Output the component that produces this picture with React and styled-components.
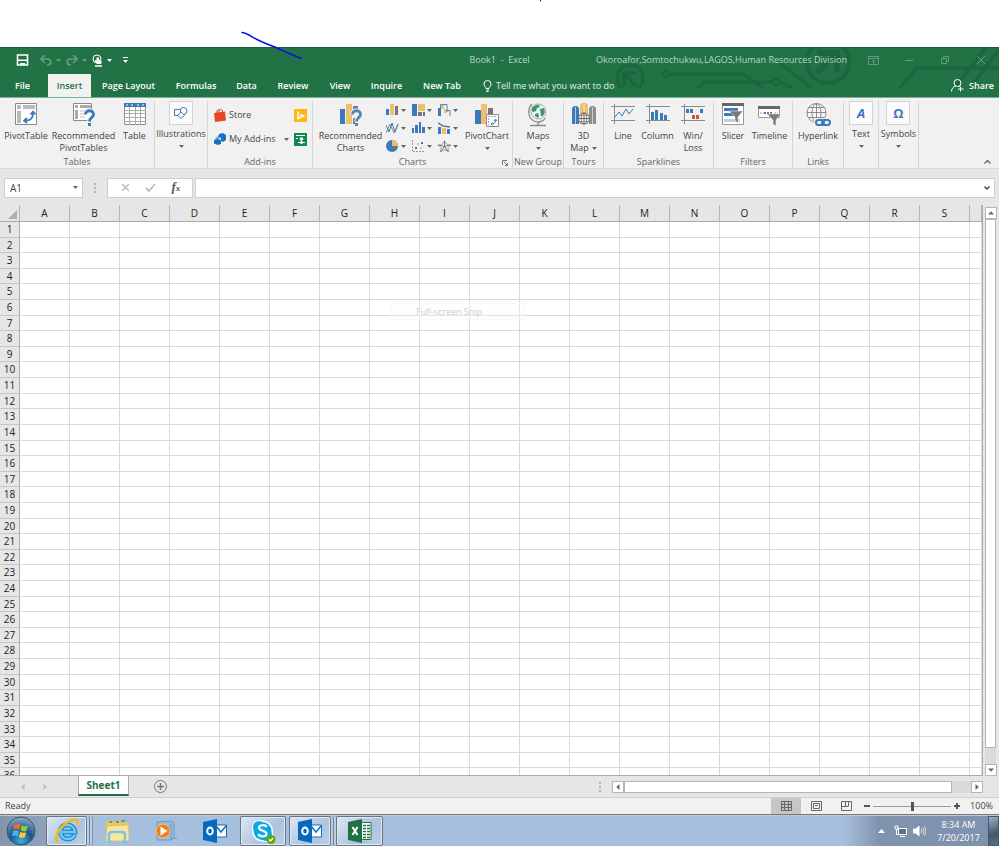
import React from "react";
import styled, { createGlobalStyle } from "styled-components";

const GlobalStyle = createGlobalStyle`
  * { box-sizing: border-box; }
  body {
    margin: 0;
    background: #fff;
    color: #444;
    font-family: "Open Sans", "Noto Sans", sans-serif;
    font-size: 9px;
    line-height: 12px;
  }
  button, input {
    font: inherit;
    color: inherit;
    background: none;
    border: 0;
    padding: 0;
    margin: 0;
    outline: none;
  }
  svg { display: block; flex: none; }
`;

const Page = styled.div`
  position: relative;
  display: flex;
  flex-direction: column;
  height: 100vh;
  padding-top: 47px;
  overflow: hidden;
`;

const Ink = styled.svg`
  position: absolute;
  top: 0;
  left: 240px;
  z-index: 5;
  pointer-events: none;
`;

/* title bar and tabs */

const Header = styled.header`
  position: relative;
  flex: none;
  background: #217346;
  color: #fff;
  border-top: 1px solid #1a6039;
`;

const Circuit = styled.svg`
  position: absolute;
  top: 0;
  right: 0;
`;

const TitleRow = styled.div`
  position: relative;
  display: grid;
  grid-template-columns: 1fr auto 1fr;
  align-items: center;
  height: 24px;
  color: #b9d6c5;
`;

const TitleText = styled.span`
  font-size: 9px;
  white-space: pre;
`;

const QuickAccess = styled.div`
  display: flex;
  align-items: center;
  gap: 5px;
  padding-left: 16px;
`;

const QuickButton = styled.button`
  display: flex;
  align-items: center;
  gap: 4px;
  opacity: ${(p) => (p.$dim ? 0.3 : 1)};

  &:first-child { margin-right: 6px; }
`;

const TitleRight = styled.div`
  display: flex;
  justify-content: flex-end;
  align-items: center;
  white-space: nowrap;
  min-width: 0;
`;

const Account = styled(TitleText)`
  padding-right: 8px;
`;

const WindowButton = styled.button`
  width: 36px;
  height: 22px;
  display: flex;
  align-items: center;
  justify-content: center;
  color: #639b7a;
`;

const TabRow = styled.nav`
  position: relative;
  display: flex;
  height: 25px;
  padding-top: 2px;
  font-weight: 600;
`;

const Tab = styled.button`
  flex: none;
  width: ${(p) => p.$width}px;
  margin-right: ${(p) => (p.$file ? 3 : 0)}px;
  background: ${(p) => (p.$active ? "#f1f1f1" : "none")};
  color: ${(p) => (p.$active ? "#217346" : "#fff")};
  white-space: nowrap;
`;

const TellMe = styled.button`
  display: flex;
  align-items: center;
  gap: 4px;
  margin-left: 11px;
  color: #e2efe7;
  font-weight: 400;
`;

const Share = styled.button`
  display: flex;
  align-items: center;
  gap: 5px;
  margin-left: auto;
  padding-right: 5px;
  color: #fff;
`;

/* ribbon */

const Ribbon = styled.div`
  position: relative;
  display: flex;
  flex: none;
  height: 72px;
  padding-top: 3px;
  background: #f1f1f1;
  border-top: 1px solid #7fb094;
  border-bottom: 1px solid #d9d9d9;
`;

const Group = styled.section`
  display: flex;
  flex-direction: column;
  flex: none;
  width: ${(p) => p.$width}px;
  margin-bottom: ${(p) => p.$bottom || 0}px;
  border-right: 1px solid #d5d5d5;
`;

const GroupBody = styled.div`
  display: flex;
  flex: 1;
  justify-content: center;
`;

const GroupName = styled.div`
  position: relative;
  height: 12px;
  line-height: 12px;
  text-align: center;
  color: #666;
  white-space: nowrap;
`;

const Launcher = styled.button`
  position: absolute;
  right: 4px;
  top: 4px;
`;

const BigButton = styled.button`
  display: flex;
  flex-direction: column;
  align-items: center;
  width: ${(p) => p.$width}px;
  padding-top: 2px;
  white-space: nowrap;
  line-height: 12px;

  .icon { height: 27px; }
  .row { display: flex; align-items: center; gap: 3px; height: 12px; }
`;

const BoxButton = styled.button`
  display: flex;
  flex-direction: column;
  align-items: center;
  white-space: nowrap;

  .box {
    display: flex;
    align-items: center;
    justify-content: center;
    width: 24px;
    height: 24px;
    margin-bottom: 3px;
    background: #fbfbfb;
    border: 1px solid #d2d2d2;
  }
  svg.arrow { margin-top: 5px; }
`;

const Glyph = styled.span`
  color: #3b7ab8;
  font-size: 13px;
  font-weight: 700;
  font-style: ${(p) => (p.$italic ? "italic" : "normal")};
`;

const AddIns = styled.div`
  display: grid;
  grid-template-columns: 1fr auto;
  align-content: start;
  width: 100%;
  padding: 2px 5px 0 6px;
`;

const AddInButton = styled.button`
  display: flex;
  align-items: center;
  gap: 3px;
  height: 24px;
  white-space: nowrap;

  svg.arrow { margin-left: 5px; }
`;

const ChartGrid = styled.div`
  display: grid;
  grid-template-columns: repeat(3, 26px);
  grid-auto-rows: 18px;
  align-content: start;
`;

const ChartButton = styled.button`
  display: flex;
  align-items: center;
  gap: 2px;
`;

const Collapse = styled.button`
  margin: auto 8px 4px auto;
`;

/* formula bar */

const FormulaBar = styled.div`
  display: flex;
  flex: none;
  align-items: center;
  height: 36px;
  padding: 1px 4px 0;
  background: #e6e6e6;
`;

const Field = styled.div`
  display: flex;
  align-items: center;
  height: 20px;
  width: ${(p) => p.$width || "auto"};
  flex: ${(p) => (p.$grow ? 1 : "none")};
  padding: 0 4px 0 5px;
  background: #fff;
  border: 1px solid #cfcfcf;
  font-size: 10px;

  input { flex: 1; min-width: 0; width: 0; }
`;

const FormulaTools = styled(Field)`
  justify-content: space-around;
  margin-right: 2px;
`;

const FxButton = styled.button`
  font-family: "Liberation Serif", serif;
  font-style: italic;
  font-weight: 700;
  font-size: 13px;
  color: #555;

  small { font-size: 9px; }
`;

const Dots = styled.svg`
  margin: ${(p) => p.$margin || "0 11px"};
`;

/* sheet */

const SheetArea = styled.main`
  position: relative;
  display: flex;
  flex: 1;
  min-height: 0;
  background: #e6e6e6;
`;

const Grid = styled.table`
  display: block;
  flex: 1;
  min-width: 0;
  overflow: hidden;
  color: #222;
  border-right: 1px solid #ababab;
  border-bottom: 1px solid #ababab;

  thead { display: block; }
  tbody {
    display: grid;
    height: 562px;
    grid-template-rows: repeat(36, 1fr);
  }
  tr {
    display: grid;
    grid-template-columns: 20px repeat(19, 50px) 1fr;
    min-height: 0;
  }
  th, td { padding: 0; font-weight: 400; text-align: center; }
`;

const ColumnHead = styled.th`
  height: 17px;
  line-height: 17px;
  font-size: 10px;
  background: #e6e6e6;
  border-right: 1px solid #b5b5b5;
  border-bottom: 1px solid #ababab;

  svg { margin: 5px 0 0 8px; }
`;

const RowHead = styled.th`
  line-height: 15px;
  overflow: hidden;
  font-size: 10px;
  background: #e6e6e6;
  border-right: 1px solid #ababab;
  border-bottom: 1px solid #c6c6c6;
`;

const Cell = styled.td`
  background: #fff;
  border-right: 1px solid #d9d9d9;
  border-bottom: 1px solid #d9d9d9;
`;

const SnipHint = styled.div`
  position: absolute;
  top: 98px;
  left: 391px;
  width: 134px;
  height: 17px;
  padding-left: 24px;
  line-height: 15px;
  color: #cfcfcf;
  background: rgba(250, 252, 252, 0.3);
  border: 1px solid #f8fafa;
`;

const VerticalScroll = styled.div`
  display: flex;
  flex-direction: column;
  width: 16px;
  padding: 2px 3px 0 2px;
`;

const ScrollButton = styled.button`
  display: flex;
  align-items: center;
  justify-content: center;
  flex: none;
  width: 12px;
  height: 12px;
  background: #fff;
  border: 1px solid #b5b5b5;
`;

const Track = styled.div`
  display: flex;
  flex-direction: ${(p) => (p.$vertical ? "column" : "row")};
  flex: 1;
  background: #dadada;
`;

const Thumb = styled.div`
  flex: ${(p) => p.$size};
  background: #fff;
  border: 1px solid #b5b5b5;
`;

const Rest = styled.div`
  flex: ${(p) => p.$size};
`;

/* sheet tabs and status bar */

const SheetBar = styled.div`
  display: flex;
  flex: none;
  height: 22px;
  background: #e6e6e6;
  border-bottom: 1px solid #d0d0d0;
`;

const SheetNav = styled.div`
  display: flex;
  justify-content: center;
  align-items: center;
  gap: 16px;
  width: 78px;
  padding-right: 10px;
`;

const SheetTab = styled.button`
  width: 51px;
  height: 20px;
  color: #217346;
  font-size: 10px;
  font-weight: 700;
  background: #fff;
  border: solid #ababab;
  border-width: 0 1px;
  border-bottom: 2px solid #217346;
`;

const AddSheet = styled.button`
  margin-left: 25px;
`;

const HorizontalScroll = styled.div`
  display: flex;
  align-items: center;
  width: 387px;
  margin-left: auto;
  padding-right: 16px;

  > div { height: 12px; }
`;

const StatusBar = styled.footer`
  display: flex;
  flex: none;
  align-items: center;
  height: 17px;
  padding: 0 6px 0 5px;
  background: #f1f1f1;
  border-bottom: 1px solid #777;
`;

const Views = styled.div`
  display: flex;
  margin-left: auto;
  margin-right: 3px;
`;

const ViewButton = styled.button`
  display: flex;
  align-items: center;
  justify-content: center;
  width: 30px;
  height: 16px;
  background: ${(p) => (p.$active ? "#c6c6c6" : "none")};
`;

const ZoomSlider = styled.input.attrs({ type: "range" })`
  appearance: none;
  width: 78px;
  height: 12px;
  margin: 0 3px;

  &::-webkit-slider-runnable-track {
    height: 1px;
    background: #9a9a9a;
  }
  &::-webkit-slider-thumb {
    appearance: none;
    width: 3px;
    height: 9px;
    margin-top: -4px;
    background: #555;
  }
`;

const ZoomValue = styled.span`
  width: 33px;
  text-align: right;
`;

/* taskbar */

const Taskbar = styled.div`
  display: flex;
  flex: none;
  height: 31px;
  background: linear-gradient(90deg, #8495ab 0, #8ea2bb 46px, #a6bfdd 92px, #a6bfdd calc(100% - 155px), #8093ae calc(100% - 120px));
  border-top: 1px solid #b8cbe0;
`;

const TaskButton = styled.button`
  display: flex;
  align-items: center;
  justify-content: center;
  flex: none;
  width: ${(p) => p.$width}px;
  margin-right: ${(p) => p.$gap || 0}px;
  border: 1px solid ${(p) => (p.$open ? "#63758c" : "transparent")};
  border-radius: 2px;
  background: ${(p) => (p.$open ? "linear-gradient(135deg, #dce7f3, #aec3dc 60%, #bccfe4)" : "none")};
  box-shadow: ${(p) => (p.$open ? "inset 0 0 0 1px #dfe9f4" : "none")}${(p) => (p.$stack ? ", 2px 0 0 #bccde1, 3px 0 0 #71849c, 5px 0 0 #bccde1, 6px 0 0 #8194ac" : "")};
`;

const Tray = styled.div`
  display: flex;
  align-items: center;
  margin-left: auto;
  color: #fff;
`;

const TrayButton = styled.button`
  width: 19px;
  display: flex;
  justify-content: center;
`;

const Clock = styled.time`
  width: 59px;
  line-height: 13px;
  text-align: center;
`;

const ShowDesktop = styled.button`
  width: 11px;
  height: 30px;
  background: linear-gradient(160deg, #9fb0c4, #42566e 60%, #5c7189);
  border: 1px solid #43566c;
`;

const BLUE = "#3b7ab8";
const SAND = "#ecc06e";
const GREY = "#777";

const Arrow = ({ color = "#666" }) => (
  <svg className="arrow" width="5" height="3" viewBox="0 0 5 3"><path d="M0 0h5L2.500 3z" fill={color} /></svg>
);

const Pointer = ({ dir, color = "#666" }) => {
  const turn = { up: 180, down: 0, left: 90, right: 270 }[dir];
  return (
    <svg width="6" height="6" viewBox="0 0 6 6">
      <path d="M0 1.500h6L3 4.800z" fill={color} transform={`rotate(${turn} 3 3)`} />
    </svg>
  );
};

const PivotTableIcon = () => (
  <svg width="22" height="22" viewBox="0 0 22 22">
    <path d="M.5.5h21v21H.5z" fill="#fff" stroke="#8a8a8a" />
    <path d="M2 2h4v4H2zM8 2h12v4H8zM2 8h4v12H2z" fill="#b9b9b9" />
    <path d="M9.500 17.500c6 .5 8.500-2 8.500-8M15.500 11.500 18 8.500l2.500 3M12 15l-3 2.500 3 2.500" fill="none" stroke={BLUE} strokeWidth="1.700" />
  </svg>
);

const RecommendedPivotIcon = () => (
  <svg width="22" height="24" viewBox="0 0 22 24">
    <path d="M.5.5h18v17H.5z" fill="#fff" stroke="#8a8a8a" />
    <path d="M2 2h3v3H2zM7 2h11v3H7zM2 7h3v9H2z" fill="#aaa" />
    <path d="M7 8h7M7 11h5M7 14h5" stroke="#bbb" />
    <path d="M12.500 11.500c0-5 8-5 8 0 0 3-4 3-4 7" fill="none" stroke="#f1f1f1" strokeWidth="5" />
    <path d="M12.500 11.500c0-5 8-5 8 0 0 3-4 3-4 7" fill="none" stroke={BLUE} strokeWidth="2.800" />
    <path d="M15 20h3v3h-3z" fill={BLUE} />
  </svg>
);

const TableIcon = () => (
  <svg width="22" height="22" viewBox="0 0 22 22">
    <path d="M.5.5h21v21H.5z" fill="#fff" stroke="#8a8a8a" />
    <path d="M0 0h22v4H0z" fill={BLUE} />
    <path d="M5.500 4v18M11.500 4v18M16.500 4v18M0 7.500h22M0 10.500h22M0 14.500h22M0 18.500h22" stroke="#aaa" />
    <path d="M2 2h2M7 2h2M13 2h2M18 2h2" stroke="#fff" />
  </svg>
);

const ShapesIcon = () => (
  <svg width="14" height="12" viewBox="0 0 14 12" fill="#fbfbfb" stroke={BLUE}>
    <circle cx="9.500" cy="4" r="3.500" />
    <path d="M.5 2.500h6v6h-6z" />
    <path d="M7 5l3.300 3.300L7 11.600 3.700 8.300z" />
  </svg>
);

const StoreIcon = () => (
  <svg width="12" height="13" viewBox="0 0 12 13">
    <path d="M0 4l11-1.500 1 9L1 13z" fill="#e8461e" />
    <path d="M3 5V3c0-2 1-2.500 2.500-2.500M5 4.500V2c0-1.800 3-2 3.500 0v2" fill="none" stroke="#c8401e" />
  </svg>
);

const AddInIcon = () => (
  <svg width="12" height="12" viewBox="0 0 12 12" fill="#1673c4">
    <path d="M5 1l4-1 3 2v5l-3 2-2-1V5L4 4z" />
    <circle cx="3.500" cy="5.500" r="2" fill="#69aee2" />
    <path d="M0 7l3-1 4 1v4l-3 1-4-1.500z" />
  </svg>
);

const BingIcon = () => (
  <svg width="13" height="13" viewBox="0 0 13 13">
    <path d="M0 0h13v13H0z" fill="#fdb813" />
    <path d="M4 2.500v7L9.500 7 6 5.500" fill="none" stroke="#fff" strokeWidth="1.600" />
  </svg>
);

const PeopleIcon = () => (
  <svg width="13" height="13" viewBox="0 0 13 13">
    <path d="M0 0h13v13H0z" fill="#0e8a50" />
    <path d="M2 2.500h9M2 5.500h2" stroke="#fff" />
    <circle cx="7.500" cy="6" r="1.800" fill="#fff" />
    <path d="M4 9h7v1H4zM6.500 8h2v3h-2z" fill="#fff" />
  </svg>
);

const RecommendedChartsIcon = () => (
  <svg width="22" height="24" viewBox="0 0 22 24">
    <path d="M0 6h5v15H0z" fill={BLUE} />
    <path d="M6 1h6v20H6z" fill={SAND} />
    <path d="M13 3h5v3h-5zM13 15h2v6h-2z" fill={GREY} />
    <path d="M12.500 11.500c0-5 8-5 8 0 0 3-4 3-4 7" fill="none" stroke="#f1f1f1" strokeWidth="5" />
    <path d="M12.500 11.500c0-5 8-5 8 0 0 3-4 3-4 7" fill="none" stroke="#4f86b5" strokeWidth="2.800" />
    <path d="M15 20h3v3h-3z" fill="#4f86b5" />
  </svg>
);

const PivotChartIcon = () => (
  <svg width="24" height="24" viewBox="0 0 24 24">
    <path d="M0 7h6v14H0z" fill={BLUE} />
    <path d="M6 1h6v20H6z" fill={SAND} />
    <path d="M13 5h5v6h-5z" fill={GREY} />
    <path d="M11.500 11.500h12v12h-12z" fill="#fff" stroke="#8a8a8a" />
    <path d="M13 13.500h9M13.500 15v7" stroke="#aaa" strokeDasharray="2 1" />
    <path d="M16 21c3 0 4.500-1 4.500-4M19 18l1.500-2 1.500 2M17.500 19.500 16 21l1.500 1.500" fill="none" stroke={BLUE} />
  </svg>
);

const GlobeIcon = () => (
  <svg width="20" height="24" viewBox="0 0 20 24">
    <circle cx="10.500" cy="8.500" r="7.500" fill="#eaf4ef" stroke="#8fb8a4" />
    <path d="M4 5c2-3 5-3 7-3l1 2-3 1-1 3-3 1-1-1zM12 6l4-1 1 4-2 4-2 0zM7 11l3-1 1 3-1 2-3-2z" fill="#3f9470" />
    <path d="M4 1C-1 6 0 15 6 18c4 2 9 1 11.500-3M10 19v3M2 22.500h16" fill="none" stroke="#8a8a8a" strokeWidth="1.300" />
  </svg>
);

const Map3dIcon = () => (
  <svg width="24" height="22" viewBox="0 0 24 22">
    <path d="M0 5l2-2h3l2 2v16H0z" fill={BLUE} />
    <path d="M8 2l2-2h4l2 2v19H8z" fill={SAND} />
    <path d="M17 5l2-2h3l2 2v16h-7z" fill="#8d8d8d" />
    <path d="M3.500 4v17M12 1v20M20.500 4v17" stroke="#fff" opacity=".6" />
    <circle cx="12" cy="15.500" r="5.500" fill="#f6f6f6" stroke="#666" />
    <path d="M6.500 15.500h11M12 10v11" stroke="#666" />
    <path d="M8 12.500h8M8 18.500h8" stroke="#888" strokeWidth=".7" />
    <ellipse cx="12" cy="15.500" rx="2.800" ry="5.500" fill="none" stroke="#666" strokeWidth=".8" />
  </svg>
);

const SparkFrame = ({ children }) => (
  <svg width="24" height="22" viewBox="0 0 24 22">
    <path d="M0 3.500h24M0 17.500h24M3.500 1v20" stroke="#8a8a8a" />
    {children}
  </svg>
);

const SlicerIcon = () => (
  <svg width="22" height="22" viewBox="0 0 22 22">
    <path d="M.5.5h21v21H.5z" fill="#fff" stroke="#999" />
    <path d="M0 0h22v3H0z" fill="#666" />
    <path d="M2 5h14v3H2zM2 10h10v3H2z" fill={BLUE} />
    <path d="M2 16h16v3H2z" fill="#b9d2ea" />
    <path d="M7 8h14l-5 6v6l-3-2v-4z" fill="#7a7a7a" stroke="#fff" strokeWidth=".5" />
  </svg>
);

const TimelineIcon = () => (
  <svg width="23" height="24" viewBox="0 0 23 24">
    <path d="M.5 3.500h21v11H.5z" fill="#fff" stroke="#999" />
    <path d="M0 3h22v3H0z" fill="#666" />
    <path d="M2 10h4M16 10h4" stroke="#ccc" strokeWidth="2" strokeDasharray="2 1" />
    <path d="M6 10h8" stroke={BLUE} strokeWidth="2" strokeDasharray="2 1" />
    <path d="M9 11h14l-5 6v6l-3-2v-4z" fill="#7a7a7a" stroke="#fff" strokeWidth=".5" />
  </svg>
);

const HyperlinkIcon = () => (
  <svg width="25" height="24" viewBox="0 0 25 24">
    <g fill="none" stroke="#8a8a8a">
      <circle cx="10.500" cy="10" r="9.500" fill="#f8f8f8" />
      <ellipse cx="10.500" cy="10" rx="4.500" ry="9.500" />
      <path d="M1 9.500h19M2.500 4.500h16M2.500 14.500h16M10.500.5v19" />
    </g>
    <rect x="8" y="15" width="17" height="9" rx="4" fill="#f1f1f1" />
    <g fill="none" stroke={BLUE} strokeWidth="2">
      <rect x="10" y="17" width="8" height="5" rx="2.500" />
      <rect x="16" y="17" width="8" height="5" rx="2.500" />
    </g>
  </svg>
);

const chartIcons = [
  ["Column chart", <><path d="M0 5h3v6H0z" fill={BLUE} /><path d="M4 0h4v11H4z" fill={SAND} /><path d="M9 2h3v9H9z" fill={GREY} /></>],
  ["Hierarchy chart", <><path d="M0 0h5v12H0z" fill={BLUE} /><path d="M6 0h7v7H6z" fill={SAND} /><path d="M6 8h4v4H6zM11 8h2v4h-2z" fill={GREY} /></>],
  ["Waterfall chart", <><path d="M0 4h3v8H0z" fill={BLUE} /><path d="M3 1h3v4H3zM6 5h3v4H6z" fill={SAND} /><path d="M2.500 4V.5H9V8M9 6.500h3V12" stroke="#4f86b5" fill="none" /></>],
  ["Line chart", <><path d="M0 3l3 7 3-9 3 9 3-8" stroke={BLUE} fill="none" /><path d="M0 11l4-9 4 9 4-9" stroke={GREY} fill="none" strokeWidth=".8" /></>],
  ["Statistic chart", <path d="M0 6h2v5H0zM3 3h3v8H3zM7 0h2v11H7zM10 5h3v6h-3z" fill={BLUE} />],
  ["Combo chart", <><path d="M0 5h3v7H0zM9 7h3v5H9z" fill={BLUE} /><path d="M4 6h4v6H4z" fill={SAND} /><path d="M0 1l5 3 7 1" stroke={GREY} fill="none" strokeWidth="1.500" /></>],
  ["Pie chart", <><circle cx="6" cy="6" r="6" fill={BLUE} /><path d="M6 6V0a6 6 0 0 1 6 6z" fill={SAND} /><path d="M6 6h6a6 6 0 0 1-2 4z" fill={GREY} /></>],
  ["Scatter chart", <><path d="M.5 0v11.500H12" stroke="#999" fill="none" strokeDasharray="2 1" /><path d="M3 7h2v2H3zM9 2h2v2H9z" fill={BLUE} /><path d="M5 3h2v2H5zM8 7h2v2H8z" fill={SAND} /></>],
  ["Radar chart", <><path d="M6.500.5v6M12.500 5l-6 1.500 4 5.500M2.500 12l4-5.500L.5 5" stroke={GREY} fill="none" /><path d="M6.500 1l3 4 3.500 0-3 2.500.5 4-4-2-4 2 .5-4L0 5h3.500z" stroke={GREY} fill="none" strokeWidth=".6" /></>],
];

const OutlookIcon = () => (
  <svg width="24" height="24" viewBox="0 0 24 24">
    <path d="M13 6h10.500v12H13z" fill="#fff" stroke="#0f6fc5" />
    <path d="M13 7l5 6 5-6" fill="none" stroke="#0f6fc5" strokeWidth="1.500" />
    <path d="M0 3l14-3v24L0 21z" fill="#0768bf" />
    <ellipse cx="7" cy="12" rx="2.800" ry="3.500" fill="none" stroke="#fff" strokeWidth="2" />
  </svg>
);

const ExcelIcon = () => (
  <svg width="24" height="24" viewBox="0 0 24 24">
    <path d="M13 3.500h10v17H13z" fill="#fff" stroke="#217346" />
    <path d="M15 6.500h7M15 9.500h7M15 12.500h7M15 15.500h7M15 18.500h7" stroke="#217346" strokeWidth="1.600" strokeDasharray="3 1" />
    <path d="M0 3l14-3v24L0 21z" fill="#1e7145" />
    <path d="M4.500 8l5 8M9.500 8l-5 8" stroke="#fff" strokeWidth="2" />
  </svg>
);

const SkypeIcon = () => (
  <svg width="25" height="25" viewBox="0 0 25 25">
    <circle cx="8" cy="8" r="7" fill="#fff" /><circle cx="15" cy="16" r="7" fill="#fff" />
    <circle cx="11.500" cy="12" r="10.500" fill="#fff" />
    <circle cx="8" cy="8" r="6" fill="#09a9e6" /><circle cx="15" cy="16" r="6" fill="#09a9e6" />
    <circle cx="11.500" cy="12" r="9" fill="#09a9e6" />
    <path d="M15.500 8c-1-2.500-7.500-2.500-7.500.8 0 3.800 7.500 2 7.500 5.900 0 3.500-7.500 3.500-8 .3" fill="none" stroke="#fff" strokeWidth="2.200" />
    <circle cx="20" cy="20.500" r="4.500" fill="#63a70a" />
    <path d="M18 20.500l1.500 1.500 2.500-3" fill="none" stroke="#fff" strokeWidth="1.200" />
  </svg>
);

const IeIcon = () => (
  <svg width="26" height="26" viewBox="0 0 26 26">
    <path d="M20.500 17c-3 6-14 5.500-14-3.500S20.500 5 20.800 14H8" fill="none" stroke="#1686cf" strokeWidth="5" />
    <path d="M20.500 17c-3 6-14 5.500-14-3.500S20.500 5 20.800 14H8" fill="none" stroke="#6ccbf5" strokeWidth="2.500" />
    <path d="M5 24c-6-1-2-12 6-18S25 0 23.500 6" fill="none" stroke="#f2b90f" strokeWidth="2.400" />
  </svg>
);

const FolderIcon = () => (
  <svg width="26" height="26" viewBox="0 0 26 26">
    <path d="M1 4l4-2 3 2h5l1-2 5 2 5 1v18H1z" fill="#e8c866" />
    <path d="M2 8l21-1 1 16H1z" fill="#f8e7a0" stroke="#d9b858" strokeWidth=".6" />
    <path d="M4 4h3M16 3h4" stroke="#3fa05a" strokeWidth="1.500" />
    <path d="M11 4h3" stroke="#d04a3a" strokeWidth="1.500" />
    <path d="M4 23v-6c0-2 1-3 3-3h10c2 0 3 1 3 3v6M4 24h4M17 24h5" fill="none" stroke="#86bfe0" strokeWidth="2.600" />
  </svg>
);

const MediaIcon = () => (
  <svg width="24" height="22" viewBox="0 0 24 22">
    <path d="M3 2l15-1 2 2v15l-3 2H3z" fill="#8fbcdc" stroke="#6b9dc2" />
    <path d="M17 4v15l6-1" fill="none" stroke="#6b9dc2" />
    <circle cx="9" cy="11" r="7" fill="#f07f1d" stroke="#f8c090" />
    <path d="M6.500 6.500l7 4.500-7 4.500z" fill="#fff" />
  </svg>
);

const StartOrb = () => (
  <svg width="30" height="30" viewBox="0 0 30 30">
    <defs>
      <radialGradient id="orb" cx=".5" cy=".85" r=".8">
        <stop offset="0" stopColor="#37b0e0" />
        <stop offset=".5" stopColor="#1a5688" />
        <stop offset="1" stopColor="#7ea3bf" />
      </radialGradient>
    </defs>
    <circle cx="15" cy="15" r="14" fill="url(#orb)" stroke="#36536f" />
    <path d="M8.500 8.500c2-1 4-1 6 .3L13.300 14c-2-1.200-4-1.200-6-.3z" fill="#ee6a2c" />
    <path d="M15.500 9.500c2 1 4 1 6.300.2l-1.300 5.200c-2 .8-4 .7-6-.3z" fill="#94c83d" />
    <path d="M7 15c2-1 4-1 6 .3l-1.300 5c-2-1-4-1-6-.2z" fill="#4db2ec" />
    <path d="M14.200 16c2 1 4 1 6 .2l-1.300 5c-2 1-4 .8-6-.3z" fill="#fccb30" />
  </svg>
);

const tabs = [
  ["File", 45], ["Insert", 43], ["Page Layout", 75], ["Formulas", 60], ["Data", 41],
  ["Review", 52], ["View", 42], ["Inquire", 51], ["New Tab", 60],
];

const columns = "ABCDEFGHIJKLMNOPQRS".split("");
const rows = Array.from({ length: 36 }, (_, i) => i + 1);

const RibbonGroup = ({ name, width, launcher, children }) => (
  <Group $width={width}>
    <GroupBody>{children}</GroupBody>
    <GroupName>
      {name}
      {launcher && (
        <Launcher aria-label="Chart options">
          <svg width="6" height="6" viewBox="0 0 6 6" fill="none" stroke="#777"><path d="M.5 5V.5H5M2 2l3 3M5.500 3v2.500H3" /></svg>
        </Launcher>
      )}
    </GroupName>
  </Group>
);

const Big = ({ icon, lines, width, arrow }) => (
  <BigButton $width={width}>
    <span className="icon">{icon}</span>
    {lines.map((line, i) => (
      <span className="row" key={line}>
        {line}
        {arrow === "inline" && i === lines.length - 1 && <Arrow />}
      </span>
    ))}
    {arrow === "below" && <span className="row"><Arrow /></span>}
  </BigButton>
);

const Boxed = ({ icon, label }) => (
  <BoxButton>
    <span className="box">{icon}</span>
    {label}
    <Arrow />
  </BoxButton>
);

const VerticalDots = ({ margin }) => (
  <Dots $margin={margin} width="2" height="10" viewBox="0 0 2 10" fill="#b5b5b5">
    <path d="M0 0h2v2H0zM0 4h2v2H0zM0 8h2v2H0z" />
  </Dots>
);

const TitleBar = () => (
  <Header>
    <Circuit width="399" height="40" viewBox="0 0 399 40" fill="none" stroke="#1b663c" strokeWidth="3">
      <circle cx="30" cy="30" r="13" />
      <path d="M24 38V25h12M25 26l11 12" strokeWidth="4" />
      <circle cx="66" cy="26" r="3" strokeWidth="2" />
      <path d="M70 26h73l20 14M97 40l9-6h66M180 34l12 6M180 15l32 25" />
      <circle cx="176" cy="34" r="3" strokeWidth="2" />
      <circle cx="228" cy="14" r="21" strokeWidth="4" />
      <path d="M218 5h19v19M237 5l-20 20" strokeWidth="6" />
      <path d="M300 40l17-20h82M355 40l31-41M370 40l31-41" />
    </Circuit>
    <TitleRow>
      <QuickAccess>
        <QuickButton aria-label="Save">
          <svg width="13" height="12" viewBox="0 0 13 12"><path d="M1.500 1h10v10h-10z" fill="none" stroke="#fff" strokeWidth="1.600" /><path d="M2 5.500h9v1.500H2zM4 9h5v2H4z" fill="#fff" /></svg>
        </QuickButton>
        <QuickButton $dim aria-label="Undo">
          <svg width="12" height="11" viewBox="0 0 12 11" fill="none" stroke="#fff" strokeWidth="1.700"><path d="M5 0 1 4l4 4M1 4h6c5 0 5 6 0 6" /></svg>
          <Arrow color="#fff" />
        </QuickButton>
        <QuickButton $dim aria-label="Redo">
          <svg width="12" height="11" viewBox="0 0 12 11" fill="none" stroke="#fff" strokeWidth="1.700"><path d="M7 0l4 4-4 4M11 4H5c-5 0-5 6 0 6" /></svg>
          <Arrow color="#fff" />
        </QuickButton>
        <QuickButton aria-label="Touch mode">
          <svg width="11" height="13" viewBox="0 0 11 13" fill="none" stroke="#fff"><circle cx="5" cy="5" r="4" /><path d="M5 3.500V7L3 6.500 5 9.500h4V7L6.500 6V3.500" fill="#fff" /><path d="M3 12h7" strokeWidth="1.500" /></svg>
          <Arrow color="#fff" />
        </QuickButton>
        <QuickButton aria-label="Customize toolbar">
          <svg width="17" height="6" viewBox="0 0 17 6" fill="#fff"><path d="M6 0h5v1H6zM6 3h5L8.500 6z" /></svg>
        </QuickButton>
      </QuickAccess>
      <TitleText>{"Book1  -  Excel"}</TitleText>
      <TitleRight>
        <Account>Okoroafor,Somtochukwu,LAGOS,Human Resources Division</Account>
        <WindowButton aria-label="Ribbon display">
          <svg width="11" height="9" viewBox="0 0 11 9" fill="none" stroke="currentColor"><path d="M.5.5h10v8H.5zM.5 2.500h10M5.500 8V4M4 5.500 5.500 4 7 5.500" /></svg>
        </WindowButton>
        <WindowButton aria-label="Minimize">
          <svg width="8" height="1" viewBox="0 0 8 1"><path d="M0 0h8v1H0z" fill="currentColor" /></svg>
        </WindowButton>
        <WindowButton aria-label="Restore">
          <svg width="8" height="8" viewBox="0 0 8 8" fill="none" stroke="currentColor"><path d="M.5 2.500h5v5h-5zM2.500 2V.5h5v5H6" /></svg>
        </WindowButton>
        <WindowButton aria-label="Close">
          <svg width="8" height="8" viewBox="0 0 8 8" stroke="currentColor"><path d="M0 0l8 8M8 0 0 8" /></svg>
        </WindowButton>
      </TitleRight>
    </TitleRow>
    <TabRow>
      {tabs.map(([name, width]) => (
        <Tab key={name} $width={width} $file={name === "File"} $active={name === "Insert"}>{name}</Tab>
      ))}
      <TellMe>
        <svg width="9" height="12" viewBox="0 0 9 12" fill="none" stroke="#fff"><path d="M3 8.500C3 7 1 6.500 1 4a3.500 3.500 0 0 1 7 0c0 2.500-2 3-2 4.500zM3 10h3M3.500 11.500h2" /></svg>
        Tell me what you want to do
      </TellMe>
      <Share>
        <svg width="13" height="13" viewBox="0 0 13 13" fill="none" stroke="#fff"><circle cx="6.500" cy="4" r="3.500" /><path d="M.5 12.500c0-3 2-5 4.500-5.500M8 7l1 .5M9.500 7.500v5M7 10h5.500" /></svg>
        Share
      </Share>
    </TabRow>
  </Header>
);

const InsertRibbon = () => (
  <Ribbon>
    <RibbonGroup name="Tables" width={155}>
      <Big icon={<PivotTableIcon />} lines={["PivotTable"]} width={49} />
      <Big icon={<RecommendedPivotIcon />} lines={["Recommended", "PivotTables"]} width={66} />
      <Big icon={<TableIcon />} lines={["Table"]} width={36} />
    </RibbonGroup>
    <RibbonGroup width={53}>
      <Boxed icon={<ShapesIcon />} label="Illustrations" />
    </RibbonGroup>
    <RibbonGroup name="Add-ins" width={105}>
      <AddIns>
        <AddInButton><StoreIcon />Store</AddInButton>
        <AddInButton aria-label="Bing Maps"><BingIcon /></AddInButton>
        <AddInButton><AddInIcon />My Add-ins<Arrow /></AddInButton>
        <AddInButton aria-label="People Graph"><PeopleIcon /></AddInButton>
      </AddIns>
    </RibbonGroup>
    <RibbonGroup name="Charts" width={200} launcher>
      <Big icon={<RecommendedChartsIcon />} lines={["Recommended", "Charts"]} width={71} />
      <ChartGrid>
        {chartIcons.map(([name, shape]) => (
          <ChartButton key={name} aria-label={name}>
            <svg width="13" height="12" viewBox="0 0 13 12">{shape}</svg>
            <Arrow />
          </ChartButton>
        ))}
      </ChartGrid>
      <Big icon={<PivotChartIcon />} lines={["PivotChart"]} width={46} arrow="below" />
    </RibbonGroup>
    <RibbonGroup name="New Group" width={51}>
      <Big icon={<GlobeIcon />} lines={["Maps"]} width={40} arrow="below" />
    </RibbonGroup>
    <RibbonGroup name="Tours" width={40}>
      <Big icon={<Map3dIcon />} lines={["3D", "Map"]} width={36} arrow="inline" />
    </RibbonGroup>
    <RibbonGroup name="Sparklines" width={110}>
      <Big icon={<SparkFrame><path d="M4 14l4-5 3 4 4-7 3 5 4-5" fill="none" stroke={BLUE} /></SparkFrame>} lines={["Line"]} width={33} />
      <Big icon={<SparkFrame><path d="M5 9h3v8H5zM9 7h3v10H9zM14 10h3v7h-3zM18 12h3v5h-3z" fill={BLUE} /></SparkFrame>} lines={["Column"]} width={36} />
      <Big icon={<SparkFrame><path d="M5 6h3v4H5zM9 6h3v4H9zM19 6h3v4h-3z" fill={BLUE} /><path d="M11 12h3v4h-3zM15 12h3v4h-3z" fill="#d2543a" /></SparkFrame>} lines={["Win/", "Loss"]} width={35} />
    </RibbonGroup>
    <RibbonGroup name="Filters" width={79}>
      <Big icon={<SlicerIcon />} lines={["Slicer"]} width={33} />
      <Big icon={<TimelineIcon />} lines={["Timeline"]} width={40} />
    </RibbonGroup>
    <RibbonGroup name="Links" width={51}>
      <Big icon={<HyperlinkIcon />} lines={["Hyperlink"]} width={46} />
    </RibbonGroup>
    <RibbonGroup width={35}>
      <Boxed label="Text" icon={<Glyph $italic aria-hidden="true">A</Glyph>} />
    </RibbonGroup>
    <RibbonGroup width={40}>
      <Boxed label="Symbols" icon={<Glyph aria-hidden="true">Ω</Glyph>} />
    </RibbonGroup>
    <Collapse aria-label="Collapse ribbon">
      <svg width="7" height="4" viewBox="0 0 7 4" fill="none" stroke="#666" strokeWidth="1.400"><path d="M.5 3.500l3-3 3 3" /></svg>
    </Collapse>
  </Ribbon>
);

const Sheet = () => (
  <SheetArea>
    <Grid>
      <thead>
        <tr>
          <ColumnHead aria-label="Select all">
            <svg width="9" height="9" viewBox="0 0 9 9"><path d="M9 0v9H0z" fill="#b0b0b0" /></svg>
          </ColumnHead>
          {columns.map((c) => <ColumnHead key={c} scope="col">{c}</ColumnHead>)}
          <ColumnHead />
        </tr>
      </thead>
      <tbody>
        {rows.map((r) => (
          <tr key={r}>
            <RowHead scope="row">{r}</RowHead>
            {columns.map((c) => <Cell key={c} />)}
            <Cell />
          </tr>
        ))}
      </tbody>
    </Grid>
    <VerticalScroll>
      <ScrollButton aria-label="Scroll up"><Pointer dir="up" /></ScrollButton>
      <Track $vertical>
        <Thumb $size={530} />
        <Rest $size={16} />
      </Track>
      <ScrollButton aria-label="Scroll down"><Pointer dir="down" /></ScrollButton>
    </VerticalScroll>
    <SnipHint>Full-screen Snip</SnipHint>
  </SheetArea>
);

const App = () => {
  const [zoom, setZoom] = React.useState(100);

  return (
    <>
      <GlobalStyle />
      <Page>
        <Ink width="310" height="64" viewBox="0 0 310 64" fill="none" stroke="#0a0af0" strokeWidth="1.500" strokeLinecap="round">
          <path d="M2 32.500c4 0 9 4 16 7.500s12 5 18 7.500 8 4 13 6 8 3 12 4.800" />
          <path d="M300.500 0v1" strokeWidth="1" />
        </Ink>
        <TitleBar />
        <InsertRibbon />
        <FormulaBar>
          <Field $width="79px">
            <input aria-label="Name box" defaultValue="A1" />
            <Arrow />
          </Field>
          <VerticalDots />
          <FormulaTools $width="86px">
            <button aria-label="Cancel">
              <svg width="9" height="9" viewBox="0 0 9 9" stroke="#bbb" strokeWidth="1.500"><path d="M1 1l7 7M8 1 1 8" /></svg>
            </button>
            <button aria-label="Enter">
              <svg width="11" height="9" viewBox="0 0 11 9" fill="none" stroke="#bbb" strokeWidth="1.800"><path d="M1 5l3 3 6-7" /></svg>
            </button>
            <FxButton aria-label="Insert function">f<small>x</small></FxButton>
          </FormulaTools>
          <Field $grow>
            <input aria-label="Formula" />
            <svg width="6" height="4" viewBox="0 0 6 4" fill="none" stroke="#444" strokeWidth="1.400"><path d="M.5.5 3 3 5.500.5" /></svg>
          </Field>
        </FormulaBar>
        <Sheet />
        <SheetBar>
          <SheetNav>
            <button aria-label="Previous sheet"><Pointer dir="left" color="#bbb" /></button>
            <button aria-label="Next sheet"><Pointer dir="right" color="#bbb" /></button>
          </SheetNav>
          <SheetTab>Sheet1</SheetTab>
          <AddSheet aria-label="New sheet">
            <svg width="13" height="13" viewBox="0 0 13 13" fill="none" stroke="#777"><circle cx="6.500" cy="6.500" r="6" /><path d="M6.500 3v7M3 6.500h7" strokeWidth="1.500" /></svg>
          </AddSheet>
          <HorizontalScroll>
            <VerticalDots margin="0 11px 0 -13px" />
            <ScrollButton aria-label="Scroll left"><Pointer dir="left" /></ScrollButton>
            <Track>
              <Thumb $size={328} />
              <Rest $size={19} />
            </Track>
            <ScrollButton aria-label="Scroll right"><Pointer dir="right" /></ScrollButton>
          </HorizontalScroll>
        </SheetBar>
        <StatusBar>
          Ready
          <Views>
            <ViewButton $active aria-label="Normal view">
              <svg width="11" height="10" viewBox="0 0 11 10" fill="none" stroke="#666"><path d="M.5.500h10v9H.5zM.5 3.500h10M.5 6.500h10M3.500 0v10M7.500 0v10" /></svg>
            </ViewButton>
            <ViewButton aria-label="Page layout view">
              <svg width="11" height="10" viewBox="0 0 11 10" fill="none" stroke="#666"><path d="M.5.500h10v9H.5zM2.500 2.500h6v5h-6zM4 4.500h3" /></svg>
            </ViewButton>
            <ViewButton aria-label="Page break view">
              <svg width="11" height="10" viewBox="0 0 11 10" fill="none" stroke="#666"><path d="M.5.500h10v9H.5zM.5 5.500h7M4.500 0v5M7.500 0v5" /></svg>
            </ViewButton>
          </Views>
          <button aria-label="Zoom out">
            <svg width="6" height="8" viewBox="0 0 6 8"><path d="M0 3h6v2H0z" fill="#555" /></svg>
          </button>
          <ZoomSlider aria-label="Zoom" min="0" max="200" value={zoom} onChange={(e) => setZoom(Number(e.target.value))} />
          <button aria-label="Zoom in">
            <svg width="6" height="6" viewBox="0 0 6 6"><path d="M0 2h6v2H0zM2 0h2v6H2z" fill="#555" /></svg>
          </button>
          <ZoomValue>{zoom}%</ZoomValue>
        </StatusBar>
        <Taskbar>
          <TaskButton $width={42} $gap={4} aria-label="Start"><StartOrb /></TaskButton>
          <TaskButton $width={41} $gap={7} $open $stack aria-label="Internet Explorer"><IeIcon /></TaskButton>
          <TaskButton $width={48} aria-label="File Explorer"><FolderIcon /></TaskButton>
          <TaskButton $width={48} $gap={1} aria-label="Media Player"><MediaIcon /></TaskButton>
          <TaskButton $width={48} $gap={1} aria-label="Outlook"><OutlookIcon /></TaskButton>
          <TaskButton $width={46} $gap={3} $open aria-label="Skype"><SkypeIcon /></TaskButton>
          <TaskButton $width={42} $gap={5} $open $stack aria-label="Outlook inbox"><OutlookIcon /></TaskButton>
          <TaskButton $width={47} $open aria-label="Excel"><ExcelIcon /></TaskButton>
          <Tray>
            <TrayButton aria-label="Show hidden icons">
              <svg width="7" height="4" viewBox="0 0 7 4"><path d="M0 4l3.500-4L7 4z" fill="#fff" /></svg>
            </TrayButton>
            <TrayButton aria-label="Network">
              <svg width="13" height="12" viewBox="0 0 13 12" fill="none" stroke="#fff"><path d="M4.500 3.500h8v6h-8zM6 11.500h5" fill="#5d7089" /><path d="M1 1h3v3H1zM2.500 4v5.500H5" /></svg>
            </TrayButton>
            <TrayButton aria-label="Volume">
              <svg width="13" height="12" viewBox="0 0 13 12" fill="none" stroke="#fff"><path d="M.5 4v4H3l3 3V1L3 4z" fill="#fff" /><path d="M8 4c1 1 1 3 0 4M9.500 2.500c2 2 2 5 0 7M11.500 1.500c2 3 2 6 0 9" strokeWidth=".8" /></svg>
            </TrayButton>
            <Clock>8:34 AM<br />7/20/2017</Clock>
            <ShowDesktop aria-label="Show desktop" />
          </Tray>
        </Taskbar>
      </Page>
    </>
  );
};

export default App;
